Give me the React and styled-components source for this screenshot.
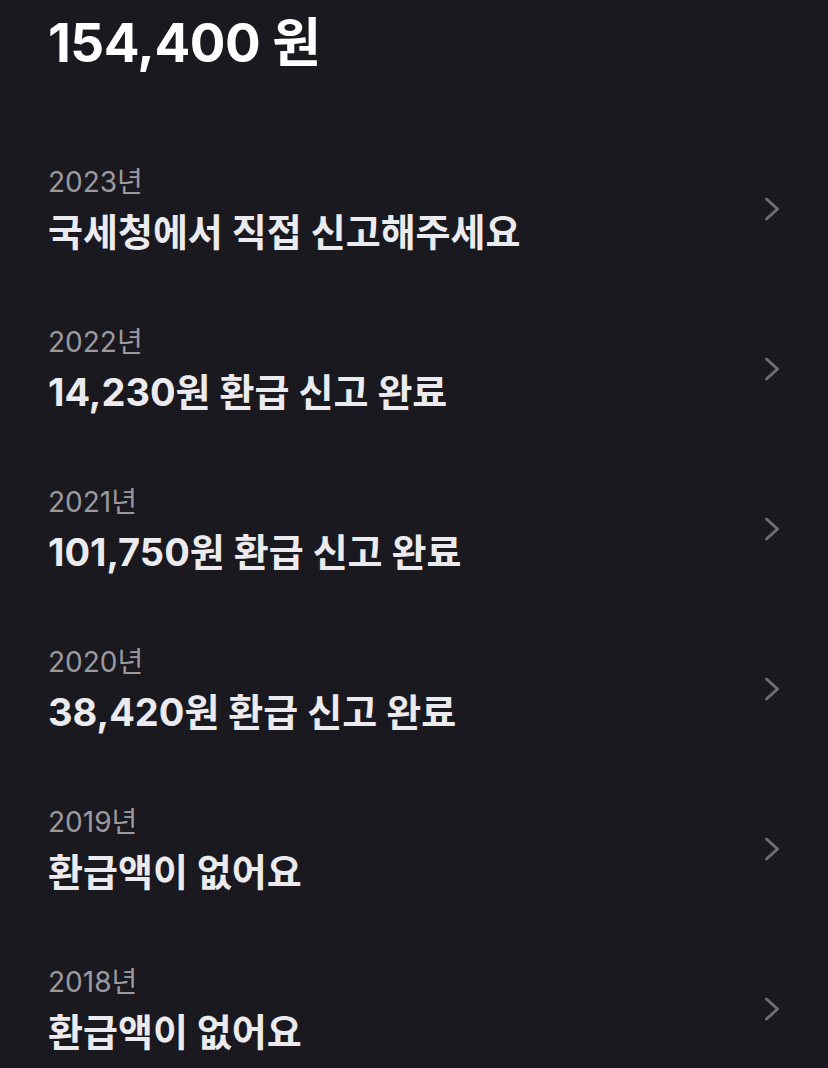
import React from "react";
import styled, { createGlobalStyle } from "styled-components";

const Global = createGlobalStyle`
  html, body {
    margin: 0;
    padding: 0;
    background: #1a191f;
  }
  body {
    font-family: "Inter", "Noto Sans CJK KR", sans-serif;
    -webkit-font-smoothing: antialiased;
  }
`;

const Page = styled.div`
  width: 828px;
  min-height: 1068px;
  background: #1a191f;
  box-sizing: border-box;
  padding: 0 48px;
  overflow: hidden;
`;

const Header = styled.header`
  height: 128px;
  box-sizing: border-box;
  padding-top: 10px;
`;

const Total = styled.h1`
  margin: 0;
  font-size: 53px;
  line-height: 67px;
  font-weight: 700;
  color: #ffffff;
  letter-spacing: -0.5px;
`;

const List = styled.ul`
  list-style: none;
  margin: 0;
  padding: 0;
`;

const Row = styled.li`
  height: 160px;
  box-sizing: border-box;
  padding: 34px 0 30px;
  display: flex;
  align-items: center;
  justify-content: space-between;
`;

const Texts = styled.div`
  display: flex;
  flex-direction: column;
  gap: 4px;
`;

const Year = styled.span`
  font-size: 28px;
  line-height: 40px;
  font-weight: 400;
  color: #9b9aa1;
`;

const Status = styled.span`
  font-size: 38px;
  line-height: 52px;
  font-weight: 700;
  color: #ebebef;
`;

const Chevron = styled.svg`
  width: 16px;
  height: 26px;
  margin-top: -2px;
  flex-shrink: 0;
`;

const ChevronIcon = () => (
  <Chevron viewBox="0 0 16 26" fill="none">
    <path
      d="M2.5 3 L13.5 13 L2.5 23"
      stroke="#6e6d78"
      strokeWidth="3"
      strokeLinecap="round"
      strokeLinejoin="round"
    />
  </Chevron>
);

const rows = [
  { year: "2023년", text: "국세청에서 직접 신고해주세요" },
  { year: "2022년", text: "14,230원 환급 신고 완료" },
  { year: "2021년", text: "101,750원 환급 신고 완료" },
  { year: "2020년", text: "38,420원 환급 신고 완료" },
  { year: "2019년", text: "환급액이 없어요" },
  { year: "2018년", text: "환급액이 없어요" },
];

export default function App() {
  return (
    <>
      <Global />
      <Page>
        <Header>
          <Total>154,400 원</Total>
        </Header>
        <List>
          {rows.map((r) => (
            <Row key={r.year}>
              <Texts>
                <Year>{r.year}</Year>
                <Status>{r.text}</Status>
              </Texts>
              <ChevronIcon />
            </Row>
          ))}
        </List>
      </Page>
    </>
  );
}
